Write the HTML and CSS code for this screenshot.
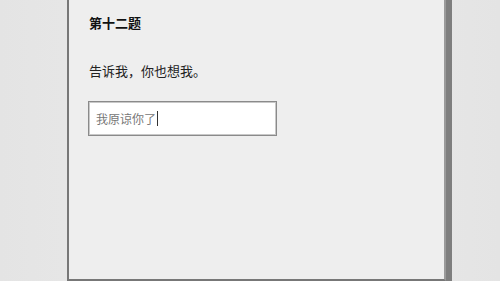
FILE: index.html
```html
<!DOCTYPE html>
<html lang="zh">
<head>
<meta charset="utf-8">
<link rel="stylesheet" href="styles.css">
</head>
<body>
<div class="page">
  <div class="card">
    <h2 class="title">第十二题</h2>
    <p class="question">告诉我，你也想我。</p>
    <div class="answer"><span class="value">我原谅你了</span><span class="caret"></span></div>
  </div>
</div>
</body>
</html>
```
FILE: styles.css
```css
html, body {
  margin: 0;
  padding: 0;
}
body {
  background: linear-gradient(to right, #e4e4e4, #ececec 50%, #e4e4e4);
  font-family: "Noto Sans CJK SC", "DejaVu Sans", sans-serif;
  height: 281px;
  overflow: hidden;
}
.page {
  padding-left: 67px;
}
.card {
  box-sizing: border-box;
  width: 379px;
  height: 281px;
  background: #eeeeee;
  border-left: 2px solid #777;
  border-right: 2px solid #9a9a9a;
  border-bottom: 2px solid #777;
  box-shadow: 6px 0 0 #7e7e7e;
  padding: 13px 20px 0 20px;
}
.title {
  margin: 0;
  font-size: 13px;
  line-height: 19px;
  font-weight: bold;
  color: #111;
}
.question {
  margin: 29px 0 0 0;
  font-size: 13px;
  line-height: 19px;
  color: #222;
}
.answer {
  box-sizing: border-box;
  margin-top: 21px;
  margin-left: -1px;
  width: 189px;
  height: 35px;
  background: #fff;
  border: 1px solid #8a8a8a;
  box-shadow: inset 0 0 0 1px #c8c8c8;
  display: flex;
  align-items: center;
  padding-left: 7px;
}
.value {
  font-size: 12px;
  color: #777;
  line-height: 16px;
}
.caret {
  width: 1px;
  height: 15px;
  background: #333;
  margin-left: 1px;
}
```
